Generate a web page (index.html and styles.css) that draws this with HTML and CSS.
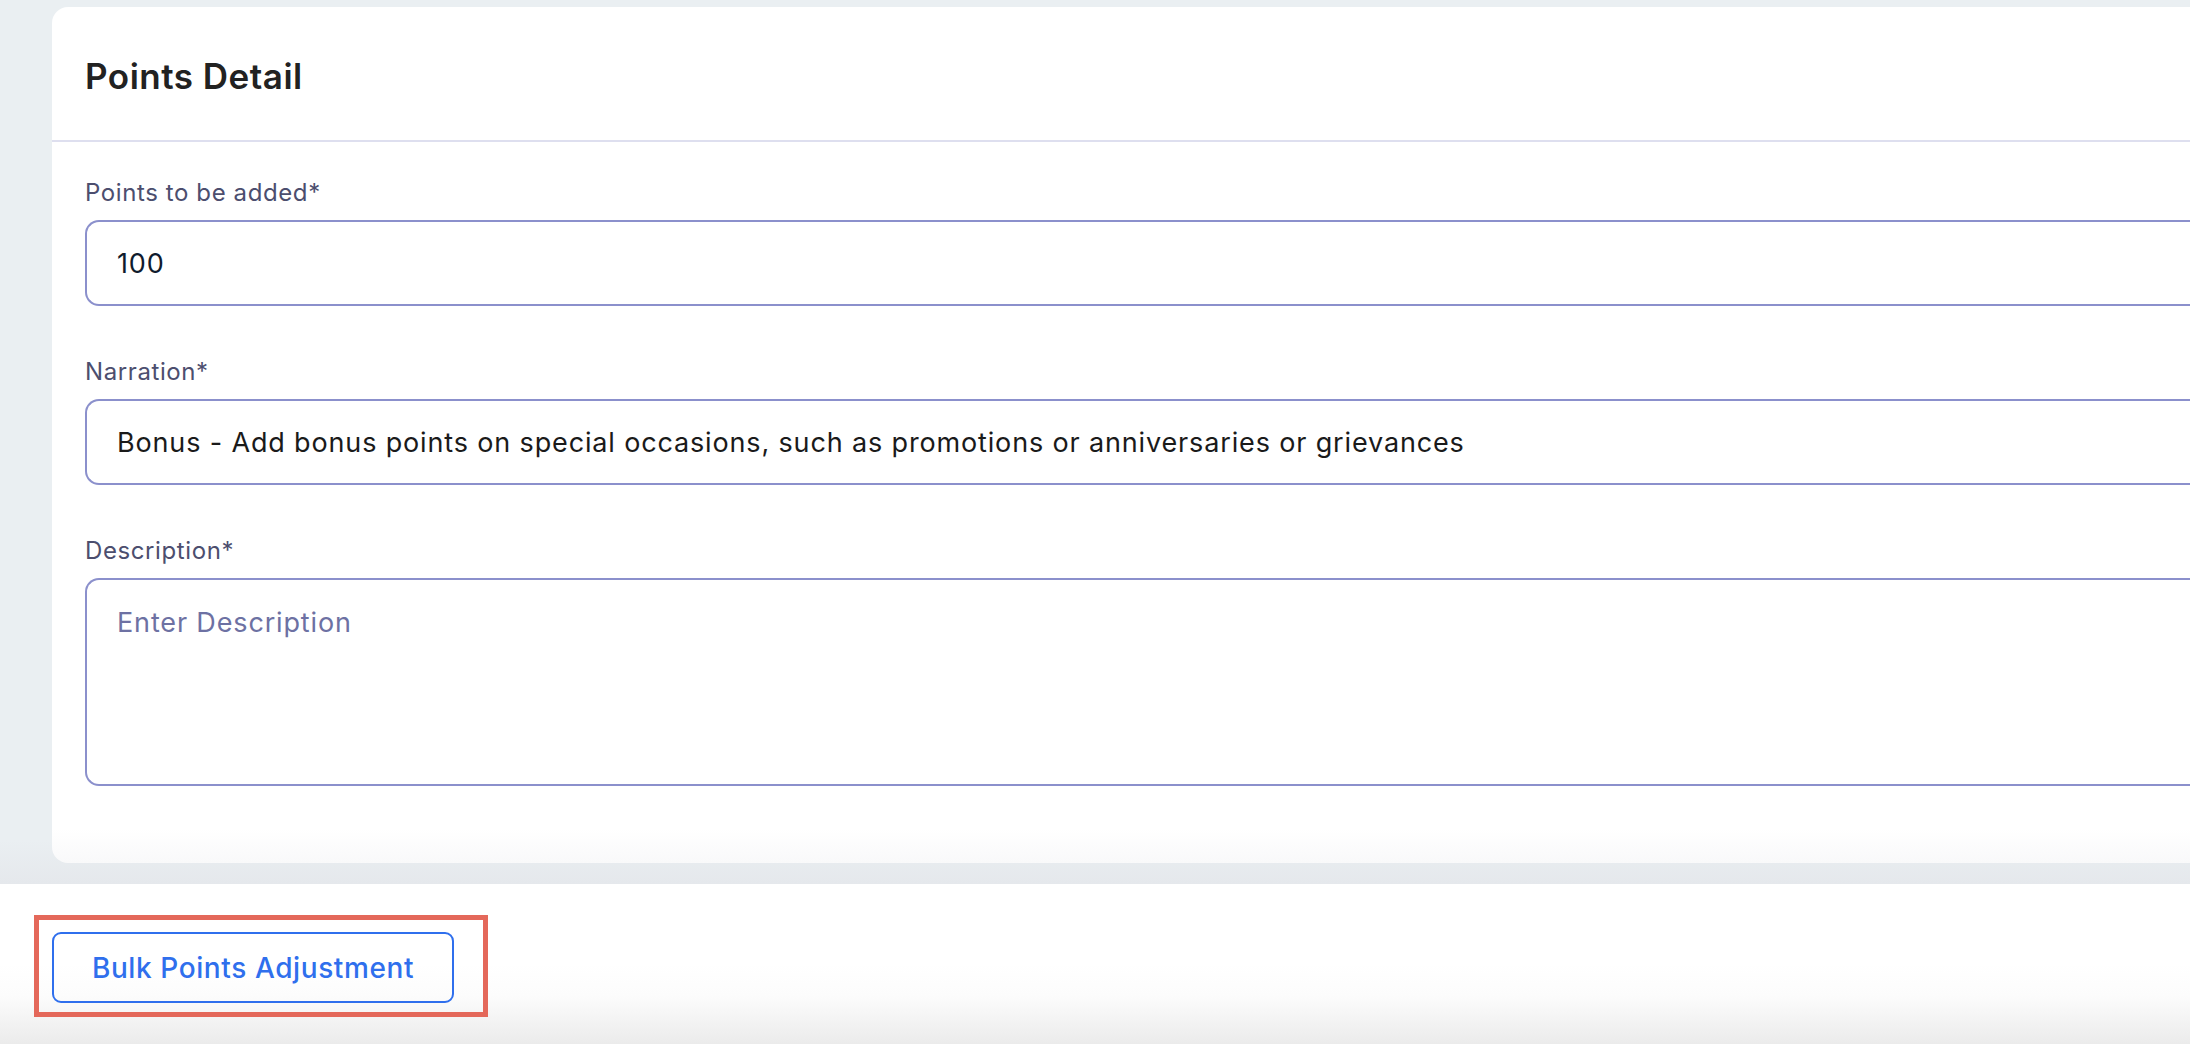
FILE: index.html
```html
<!DOCTYPE html>
<html lang="en">
<head>
<meta charset="utf-8">
<title>Points Detail</title>
<link rel="stylesheet" href="styles.css">
</head>
<body>
<main class="main">
  <section class="card">
    <header class="card-header">
      <h1 class="card-title">Points Detail</h1>
    </header>
    <div class="card-body">
      <div class="field">
        <label class="field-label">Points to be added*</label>
        <div class="input input-number">100</div>
      </div>
      <div class="field">
        <label class="field-label">Narration*</label>
        <div class="input">Bonus - Add bonus points on special occasions, such as promotions or anniversaries or grievances</div>
      </div>
      <div class="field">
        <label class="field-label">Description*</label>
        <div class="textarea"><span class="placeholder">Enter Description</span></div>
      </div>
    </div>
  </section>
</main>
<footer class="footer">
  <div class="highlight">
    <button class="btn-outline">Bulk Points Adjustment</button>
  </div>
</footer>
</body>
</html>
```
FILE: styles.css
```css
* { box-sizing: border-box; }
html, body { margin: 0; padding: 0; }
body {
  width: 2190px;
  height: 1044px;
  overflow: hidden;
  background: #eaeff2;
  font-family: Inter, "Noto Sans", sans-serif;
  display: flex;
  flex-direction: column;
}
.main {
  padding: 7px 0 21px 52px;
  background: linear-gradient(to bottom, #eaeff2 0%, #eaeff2 95%, #e5e8ec 100%);
}
.card {
  border-radius: 16px 0 0 16px;
  height: 856px;
  background: linear-gradient(to bottom, #fff 0%, #fff 96%, #f9f9fa 100%);
}
.card-header {
  height: 135px;
  padding-left: 33px;
  display: flex;
  align-items: center;
  border-bottom: 2px solid #dedfef;
}
.card-title {
  margin: 0;
  padding-top: 4px;
  font-size: 35px;
  font-weight: 600;
  letter-spacing: 0.5px;
  color: #222;
}
.card-body {
  padding: 36px 0 0 33px;
  display: flex;
  flex-direction: column;
  gap: 51px;
}
.field {
  display: flex;
  flex-direction: column;
  gap: 12px;
}
.field-label {
  font-size: 24px;
  line-height: 30px;
  letter-spacing: 0.6px;
  color: #4c4e6e;
}
.input {
  height: 86px;
  border: 2px solid #8b90cc;
  border-right: none;
  border-radius: 14px 0 0 14px;
  padding: 0 30px;
  display: flex;
  align-items: center;
  font-size: 27px;
  letter-spacing: 0.85px;
  color: #1a1a1a;
  white-space: nowrap;
}
.input-number { color: #0f1b2d; }
.textarea {
  height: 208px;
  border: 2px solid #8b90cc;
  border-right: none;
  border-radius: 14px 0 0 14px;
  padding: 26px 30px;
  font-size: 27px;
  letter-spacing: 0.85px;
}
.placeholder { color: #6d71a3; }
.footer {
  flex: 1;
  padding: 31px 0 0 34px;
  background: linear-gradient(to bottom, #fff 0%, #fff 50%, #fcfcfc 70%, #ebebeb 100%);
}
.highlight {
  display: inline-block;
  border: 5px solid #e4685a;
  padding: 12px 29px 9px 13px;
}
.btn-outline {
  display: block;
  height: 71px;
  width: 402px;
  border: 2px solid #2f6fed;
  border-radius: 9px;
  background: transparent;
  color: #2f6fed;
  font-family: Inter, "Noto Sans", sans-serif;
  font-size: 28px;
  font-weight: 500;
  letter-spacing: 0.6px;
  padding: 0;
}
```
